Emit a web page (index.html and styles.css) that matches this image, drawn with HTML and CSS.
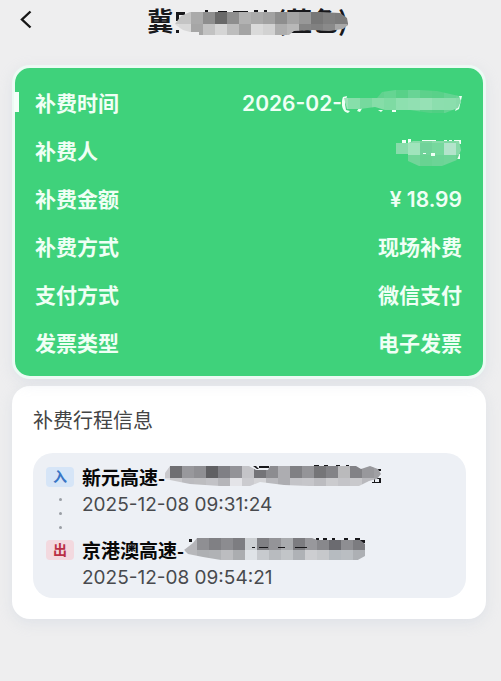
FILE: index.html
```
<!DOCTYPE html>
<html lang="zh-CN">
<head>
  <meta charset="UTF-8">
  <meta name="viewport" content="width=device-width, initial-scale=1.0">
  <title>补费详情</title>
  <link rel="stylesheet" href="styles.css">
</head>
<body>
  <header class="topbar">
    <button class="back" aria-label="返回">
      <svg width="12" height="20" viewBox="0 0 12 20"><path d="M10.500 1.500 L2 9.500 L10.500 17.500" fill="none" stroke="#161616" stroke-width="2.4"/></svg>
    </button>
    <h1>冀<span class="plate"></span>(蓝色)
      <svg class="mosaic title-mask" width="176" height="26" viewBox="176 10 176 26" data-tiles="title">
        <path class="ink" d="M177 12h9v3h-6v6h-3zM177 30h3v3h-3zM206 10h3v2h-3zM219 11h9v1h-9zM234 11h15v1h-15zM255 10h4v2h-4zM265 10h3v2h-3z"/>
        <clipPath id="title"><path d="M176 24l6-8 9-4h130l20 1 7 5 1 7-5 4-14 2-16-1-19 1-5 4h-90v-3h-9l-7-2-6-4z"/></clipPath>
      </svg>
    </h1>
  </header>

  <main>
    <section class="card summary">
      <dl>
        <div class="row">
          <dt>补费时间</dt>
          <dd>2026-02-<svg class="mosaic" width="120" height="28" viewBox="342 88 120 28" data-tiles="time">
            <path class="light" d="M343 95l4-1-2 8 1 6 4 1-2 2c-7-2-7-11-5-16zM357 109l4-6h3l-4 7zM378 108h5l-2 2zM392 108h4v2h-4zM458 94h4l-3 13-4 2 3-8z"/>
            <clipPath id="time"><path d="M344 96h33l5-6 20-3 35 2 22 5 2 5-3 7-13 5h-15l-20-3h-25l-10-3-15 2h-13z"/></clipPath>
          </svg></dd>
        </div>
        <div class="row">
          <dt>补费人</dt>
          <dd><svg class="mosaic" width="66" height="28" viewBox="396 140 66 28" data-tiles="person">
            <path class="light" d="M402 142h4v3h-4zM408 141h3v4h-3zM422 142h14v2h-14zM444 142h3v2h-3zM449 142h3v2h-3zM454 142h7v4h-7zM457 156h3v5h-3z"/>
            <clipPath id="person"><path d="M396 145h12l5-2h46l2 9-4 10-15 6h-23l-11-5v-7h-12z"/></clipPath>
            <path class="light over" d="M423 155h3v1h-3zM431 155h4v3h-4z"/>
          </svg></dd>
        </div>
        <div class="row"><dt>补费金额</dt><dd>¥ 18.99</dd></div>
        <div class="row"><dt>补费方式</dt><dd>现场补费</dd></div>
        <div class="row"><dt>支付方式</dt><dd>微信支付</dd></div>
        <div class="row"><dt>发票类型</dt><dd>电子发票</dd></div>
      </dl>
    </section>

    <section class="card trip">
      <h2>补费行程信息</h2>
      <div class="route">
        <div class="stop">
          <div class="marker"><span class="badge in">入</span><i></i><i></i><i></i></div>
          <div class="info">
            <strong>新元高速-<svg class="mosaic" width="218" height="22" viewBox="163 467 218 22" data-tiles="entry">
              <path class="ink" d="M166 479h5v2h-5zM251 468h3l3 3h-2zM257 468h10v2h-10zM312 467h5v2h-5zM322 467h4v2h-4zM334 467h4v2h-4zM344 467h3v2h-3zM370 484h9v1h-9zM372 480h5v1h-5zM372 480h1v5h-1zM377 480h2v5h-2zM376 471h3v2h-3zM199 482h3v2h-3z"/>
              <clipPath id="entry"><path d="M163 475l5-7h79l7 4h12l2-4h86l5 3 9-3 8 3 3 5-4 5-8 2-10 5h-50l-25-1-24-3-10 4h-30l-30-2-25-5-10-4z"/></clipPath>
            </svg></strong>
            <time>2025-12-08 09:31:24</time>
          </div>
        </div>
        <div class="stop">
          <div class="marker"><span class="badge out">出</span></div>
          <div class="info">
            <strong>京港澳高速-<svg class="mosaic" width="184" height="22" viewBox="179 540 184 22" data-tiles="exit">
              <path class="ink" d="M184 541h3v3h-3zM311 540h3v2h-3zM318 540h4v2h-4zM327 540h3v2h-3zM339 540h4v2h-4zM350 540h5v2h-5zM355 542h5v3h-5z"/>
              <clipPath id="exit"><path d="M179 552l9-7 4-5h115l5 2h43l5 4v12l-9 5h-105l-18 1-30-5-15-3z"/></clipPath>
              <path class="ink over" d="M247 549h3v1h-3zM254 549h9v1h-9zM273 549h7v1h-7zM290 549h12v1h-12z"/>
            </svg></strong>
            <time>2025-12-08 09:54:21</time>
          </div>
        </div>
      </div>
    </section>
  </main>

  <script>
    // each mosaic: left edge, top edge, then rows of 12px tiles
    const mosaics = {
      title: { x: 168, y: 12, rows: [
        'c4c4c4 c4c4c4 aaaaaa 8e8e8e 696969 8e8e8e b2b2b2 aaaaaa a2a2a2 8e8e8e a4a4a4 989898 777777 808080 7c7c7c 5c5c5c 949494',
        'dddddd d8d8d8 a6a6a6 c2c2c2 d5d5d5 bdbdbd a4a4a4 dadada d2d2d2 aeaeae b8b8b8 858585 818181 8a8a8a a8a8a8 8e8e8e a4a4a4'] },
      time: { x: 336, y: 84, rows: [
        '6bd697 6bd697 65d492 60d28e 65d592 58d188 68d495 5dd18b 59d189 63d492 69d696',
        '9be3b7 87dfaa 76d99e 86dda8 7edba3 8de0af 91e0b2 96e1b5 8cdeae 8bdead 87dbaa',
        '65d492 5dd28c 58d188 68d495 5dd18b 60d28e 65d592 55d086 50cf83 63d492 60d28e'] },
      person: { x: 396, y: 133, rows: [
        '80d9a3 89dcaa 79d79d 88dba9 80d9a3 89dcaa',
        '88dcab a0e4bc 71d29a 76d89d b3e4cb 86daa8',
        '70d598 72d599 68d392 6cd496 6fd598 65d290'] },
      entry: { x: 156, y: 468, rows: [
        'c9c9cd 6f6f72 98989c 8f8f93 606063 808085 939398 c4c4c8 747478 8c8c90 adadb1 808084 949498 757578 838387 bababc 828286 98989c a0a0a4',
        'dddde0 c9c9cc bbbbbf bdbdc0 c2c2c6 b5b5b9 e4e4e8 cbcbcf d4d4d7 b9b9bd adadb1 c4c4c8 c6c6ca bcbcc0 cbcbce c4c4c8 c9c9cc b9b9bd aaaaae'] },
      exit: { x: 168, y: 540, rows: [
        'b0b0b3 b5b5b9 8f8f93 808084 8c8c90 7d7d81 cdd0d3 808084 949498 a9abae 7c7c80 98989c 88888c 6b6b70 8e8e92 7c7c80',
        'c8c9cc b7b8bb aeb0b3 b0b2b5 bcbdc0 abadb0 dfe3e7 c7cace b8bbbf c2c5c8 afb2b6 cdced1 c6c8cb b6bbc0 babec2 adb0b4'] }
    };

    document.querySelectorAll('.mosaic').forEach(svg => {
      const { x, y, rows } = mosaics[svg.dataset.tiles];
      const group = document.createElementNS('http://www.w3.org/2000/svg', 'g');
      group.setAttribute('clip-path', `url(#${svg.dataset.tiles})`);
      rows.forEach((row, r) => row.split(' ').forEach((color, c) => {
        const tile = document.createElementNS('http://www.w3.org/2000/svg', 'rect');
        tile.setAttribute('x', x + c * 12);
        tile.setAttribute('y', y + r * 12);
        tile.setAttribute('width', 12);
        tile.setAttribute('height', 12);
        tile.setAttribute('fill', '#' + color);
        group.appendChild(tile);
      }));
      svg.insertBefore(group, svg.querySelector('.over'));
    });
  </script>
</body>
</html>
```
FILE: styles.css
```
* {
  box-sizing: border-box;
}
body {
  margin: 0;
  min-height: 100vh;
  background: #eeeeef;
  font-family: Inter, "Noto Sans CJK SC", sans-serif;
}
.topbar {
  display: grid;
  grid-template-columns: 40px 1fr 46px;
  align-items: center;
  height: 40px;
}
.back {
  display: flex;
  width: 40px;
  padding: 0 0 0 20px;
  border: none;
  background: none;
  cursor: pointer;
}
h1 {
  position: relative;
  justify-self: center;
  display: flex;
  margin: 0;
  color: #18181b;
  font-family: "Noto Sans CJK SC", sans-serif;
  font-size: 26px;
  font-weight: 700;
  line-height: 40px;
}
.plate {
  width: 103px;
}
.title-mask {
  position: absolute;
  left: 28px;
  top: 10px;
}
main {
  display: flex;
  flex-direction: column;
  gap: 7px;
  padding: 25px 15px 40px 12px;
}
.card {
  border-radius: 18px;
  box-shadow: 0 4px 14px rgba(190, 198, 215, 0.3);
}
.summary {
  position: relative;
  padding: 12px 21px 8px 20px;
  border: 3px solid #ecfaf4;
  background: #3fd27b;
  color: #effff5;
  font-size: 21px;
  font-weight: 600;
}
.summary::before {
  content: "";
  position: absolute;
  left: -1px;
  top: 24px;
  width: 5px;
  height: 20px;
  background: #f4fff9;
}
dl,
dd {
  margin: 0;
}
.row {
  display: flex;
  justify-content: space-between;
  height: 48px;
  line-height: 48px;
}
dd {
  display: flex;
  align-items: center;
}
.mosaic {
  flex: none;
}
.ink {
  fill: #18181b;
}
.light {
  fill: #effff5;
}
.trip {
  padding: 21px 20px 21px 21px;
  background: #fff;
}
h2 {
  margin: 0 0 18px;
  color: #444;
  font-size: 20px;
  font-weight: 400;
  line-height: 28px;
}
.route {
  display: flex;
  flex-direction: column;
  gap: 6px;
  padding: 9px 13px 6px;
  border-radius: 20px;
  background: #edf0f5;
}
.stop {
  display: flex;
  gap: 8px;
}
.marker {
  display: flex;
  flex-direction: column;
  align-items: center;
  gap: 11px;
  padding-top: 5px;
}
.marker i {
  width: 3px;
  height: 3px;
  border-radius: 50%;
  background: #9a9ea5;
}
.badge {
  width: 28px;
  height: 20px;
  border-radius: 4px;
  font-size: 14px;
  font-weight: 700;
  line-height: 20px;
  text-align: center;
}
.in {
  background: #d6e5f7;
  color: #3975c6;
}
.out {
  background: #f3d9df;
  color: #b92f45;
}
.info strong {
  display: flex;
  align-items: center;
  height: 28px;
  color: #080808;
  font-family: "Noto Sans CJK SC", sans-serif;
  font-size: 19px;
  font-weight: 700;
}
.info time {
  display: block;
  color: #484a4e;
  font-size: 19px;
  line-height: 29px;
}
```
